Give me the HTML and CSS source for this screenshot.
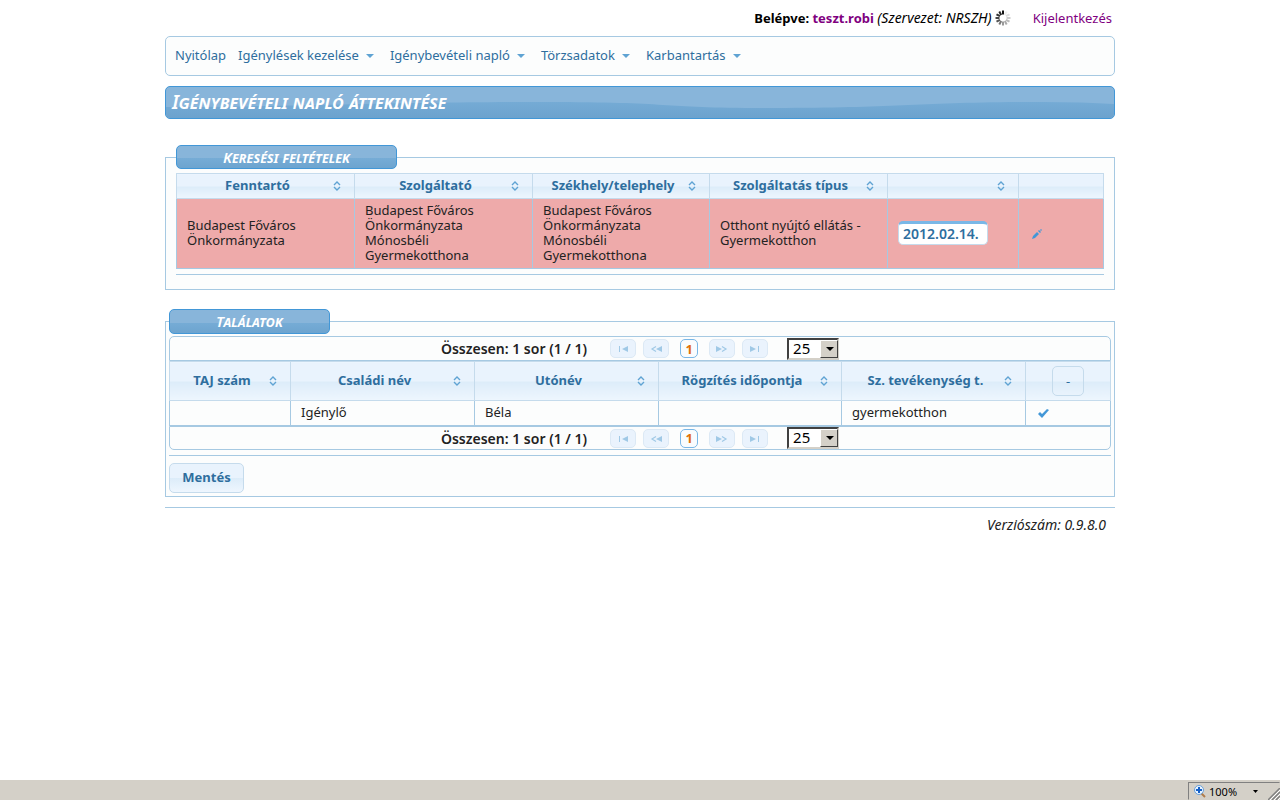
FILE: index.html
```html
<!DOCTYPE html>
<html lang="hu">
<head>
<meta charset="utf-8">
<title>Igénybevételi napló áttekintése</title>
<link rel="stylesheet" href="styles.css">
</head>
<body>
<svg class="defs" aria-hidden="true">
  <symbol id="sort" viewBox="0 0 8 10"><path d="M1 4 4 1 7 4M1 6 4 9 7 6" fill="none" stroke="#5fa3d3" stroke-width="1.4"/></symbol>
  <symbol id="first" viewBox="0 0 12 7"><path d="M2 1h1v6H2zM11 1v6L5 4z" fill="#a0c9e6"/></symbol>
  <symbol id="prev" viewBox="0 0 12 7"><path d="M12 1v6L6 4z" fill="#a0c9e6"/><path d="M6 1.500 2 4 6 6.500" fill="none" stroke="#a0c9e6" stroke-width="1.200"/></symbol>
  <symbol id="next" viewBox="0 0 12 7"><path d="M0 1v6l6-3z" fill="#a0c9e6"/><path d="m6 1.500 4 2.500L6 6.500" fill="none" stroke="#a0c9e6" stroke-width="1.200"/></symbol>
  <symbol id="last" viewBox="0 0 12 7"><path d="M9 1h1v6H9zM1 1v6l6-3z" fill="#a0c9e6"/></symbol>
</svg>
<div class="page">
  <header class="userbar">
    <span><b>Belépve: <a href="#">teszt.robi</a></b> <i>(Szervezet: NRSZH)</i></span>
    <svg class="spinner" viewBox="-8 -8 16 16" stroke-width="2">
      <path d="M0-3.500V-7.500" stroke="#111"/><path d="M-1.800-3-3.700-6.500" stroke="#222"/><path d="M-3-1.800-6.500-3.700" stroke="#333"/>
      <path d="M-3.500 0H-7.500" stroke="#444"/><path d="M-3 1.800-6.500 3.700" stroke="#555"/><path d="M-1.800 3-3.700 6.500" stroke="#777"/>
      <path d="M0 3.500V7.500" stroke="#999"/><path d="M1.800 3 3.700 6.500" stroke="#aaa"/><path d="M3 1.800 6.500 3.700" stroke="#bbb"/>
      <path d="M3.500 0H7.500" stroke="#ccc"/><path d="M3-1.800 6.500-3.700" stroke="#ddd"/><path d="M1.800-3 3.700-6.500" stroke="#eee"/>
    </svg>
    <a class="logout" href="#">Kijelentkezés</a>
  </header>

  <nav class="menu">
    <a href="#">Nyitólap</a>
    <a href="#" class="sub">Igénylések kezelése</a>
    <a href="#" class="sub">Igénybevételi napló</a>
    <a href="#" class="sub">Törzsadatok</a>
    <a href="#" class="sub">Karbantartás</a>
  </nav>

  <h1 class="title">
    <svg class="wave" viewBox="0 0 950 31" preserveAspectRatio="none"><defs><linearGradient id="deep" x2="0" y2="1"><stop stop-color="#75abd5"/><stop offset="1" stop-color="#6da3ce"/></linearGradient></defs><path d="M0 20C120 20 180 16 350 15S480 21 610 21 750 15 880 15Q920 15 950 17V31H0z" fill="url(#deep)"/></svg>
    <span>Igénybevételi napló áttekintése</span>
  </h1>

  <fieldset class="panel search">
    <legend>Keresési feltételek</legend>
    <table class="grid">
      <colgroup><col class="w178"><col class="w178"><col class="w177"><col class="w178"><col class="w131"><col class="w85"></colgroup>
      <thead><tr>
        <th><span class="head"><span>Fenntartó</span><svg><use href="#sort"/></svg></span></th>
        <th><span class="head"><span>Szolgáltató</span><svg><use href="#sort"/></svg></span></th>
        <th><span class="head"><span>Székhely/telephely</span><svg><use href="#sort"/></svg></span></th>
        <th><span class="head"><span>Szolgáltatás típus</span><svg><use href="#sort"/></svg></span></th>
        <th><span class="head"><span></span><svg><use href="#sort"/></svg></span></th>
        <th></th>
      </tr></thead>
      <tbody><tr class="alert">
        <td>Budapest Főváros Önkormányzata</td>
        <td>Budapest Főváros Önkormányzata Mónosbéli Gyermekotthona</td>
        <td>Budapest Főváros Önkormányzata Mónosbéli Gyermekotthona</td>
        <td>Otthont nyújtó ellátás - Gyermekotthon</td>
        <td><input class="date" type="text" value="2012.02.14." aria-label="Dátum"></td>
        <td><button class="icon" type="button" aria-label="Szerkesztés"><svg viewBox="0 0 16 16"><path d="m3 14 1-3 4-4 2 2-4 4zM9 6l1-1 2 2-1 1zM11 5l1-1 1 1-1 1z" fill="#4297d7"/></svg></button></td>
      </tr></tbody>
    </table>
    <hr>
  </fieldset>

  <fieldset class="panel results">
    <legend>Találatok</legend>
    <div class="pager top">
      <b>Összesen: 1 sor (1 / 1)</b>
      <div class="steps">
        <button type="button" disabled aria-label="Első"><svg><use href="#first"/></svg></button>
        <button type="button" disabled aria-label="Előző"><svg><use href="#prev"/></svg></button>
        <button type="button" class="current">1</button>
        <button type="button" disabled aria-label="Következő"><svg><use href="#next"/></svg></button>
        <button type="button" disabled aria-label="Utolsó"><svg><use href="#last"/></svg></button>
      </div>
      <span class="size"><select aria-label="Sorok száma"><option>25</option></select></span>
    </div>
    <table class="grid">
      <colgroup><col class="w121"><col class="w184"><col class="w184"><col class="w183"><col class="w184"><col class="w85"></colgroup>
      <thead><tr>
        <th><span class="head"><span>TAJ szám</span><svg><use href="#sort"/></svg></span></th>
        <th><span class="head"><span>Családi név</span><svg><use href="#sort"/></svg></span></th>
        <th><span class="head"><span>Utónév</span><svg><use href="#sort"/></svg></span></th>
        <th><span class="head"><span>Rögzítés időpontja</span><svg><use href="#sort"/></svg></span></th>
        <th><span class="head"><span>Sz. tevékenység t.</span><svg><use href="#sort"/></svg></span></th>
        <th><button class="filter" type="button">-</button></th>
      </tr></thead>
      <tbody><tr>
        <td></td><td>Igénylő</td><td>Béla</td><td></td><td>gyermekotthon</td>
        <td><button class="icon" type="button" aria-label="Kiválaszt"><svg viewBox="0 0 16 16"><path d="m2 10 2-2 2 2 5-5 2 1-7 8z" fill="#4297d7"/></svg></button></td>
      </tr></tbody>
    </table>
    <div class="pager bottom">
      <b>Összesen: 1 sor (1 / 1)</b>
      <div class="steps">
        <button type="button" disabled aria-label="Első"><svg><use href="#first"/></svg></button>
        <button type="button" disabled aria-label="Előző"><svg><use href="#prev"/></svg></button>
        <button type="button" class="current">1</button>
        <button type="button" disabled aria-label="Következő"><svg><use href="#next"/></svg></button>
        <button type="button" disabled aria-label="Utolsó"><svg><use href="#last"/></svg></button>
      </div>
      <span class="size"><select aria-label="Sorok száma"><option>25</option></select></span>
    </div>
    <hr>
    <button class="save" type="button">Mentés</button>
  </fieldset>

  <footer class="version">Verziószám: 0.9.8.0</footer>
</div>

<div class="status">
  <button class="zoom" type="button">
    <svg class="lens" viewBox="0 0 12 13"><path d="m7 8 4 4" stroke="#b07c4a" stroke-width="2"/><circle cx="5" cy="5" r="4.500" fill="#e8f4ff" stroke="#6a9fd8"/><path d="M5 2v6M2 5h6" stroke="#1560c8" stroke-width="2"/></svg>
    <span>100%</span>
    <svg class="drop" viewBox="0 0 5 3"><path d="M0 0h5L2.500 3z"/></svg>
  </button>
  <svg class="grip" viewBox="0 0 12 12"><path d="M0 12 12 0M4 12l8-8M8 12l4-4" stroke="#808080" stroke-width="1.500"/><path d="M2 12 12 2M6 12l6-6M10 12l2-2" stroke="#fff"/></svg>
</div>
</body>
</html>
```

FILE: styles.css
```css
* { box-sizing: border-box; }
body {
  margin: 0;
  min-height: 100vh;
  display: flex;
  flex-direction: column;
  background: #fff;
  color: #222;
  font: 13px/15px "Noto Sans", "Open Sans", sans-serif;
}
button, input, select { font-family: inherit; margin: 0; }
.defs { display: none; }
.page { width: 100%; max-width: 950px; margin: 0 auto; }

.userbar {
  display: flex;
  justify-content: flex-end;
  align-items: center;
  height: 36px;
  padding-right: 3px;
  color: #000;
}
.userbar a { color: #800080; text-decoration: none; }
.userbar i { font-size: 14px; }
.spinner { width: 16px; height: 16px; margin-left: 3px; }
.userbar .logout { margin-left: 22px; }

.menu {
  display: flex;
  flex-wrap: wrap;
  align-items: center;
  gap: 12px;
  min-height: 40px;
  padding: 0 9px 2px;
  border: 1px solid #a6c9e2;
  border-radius: 5px;
  background: #fcfdfd;
}
.menu a { color: #2e6e9e; text-decoration: none; }
.menu .sub { display: flex; align-items: center; gap: 7px; margin-right: 4px; }
.menu .sub::after { content: ""; margin-top: 2px; border: 4px solid transparent; border-top-color: #5fa3d3; border-bottom: 0; }

.title, .panel legend {
  border: 1px solid #4297d7;
  border-radius: 5px;
  color: #fff;
  font-style: italic;
  font-weight: 600;
  font-variant: small-caps;
}
.title {
  position: relative;
  margin: 10px 0 26px;
  padding: 6px;
  background: #88b5da;
  font-size: 19px;
  line-height: 19px;
  overflow: hidden;
}
.title span { position: relative; }
.wave { position: absolute; inset: 0; width: 100%; height: 100%; }

.panel { margin: 0; border: 1px solid #a6c9e2; background: #fcfdfd; min-width: 0; }
.panel legend {
  margin-left: 0;
  margin-right: auto;
  padding: 0;
  background: linear-gradient(#88b5da 55%, #76acd6 55%, #6da4cf);
  font-size: 15px;
  line-height: 22px;
  text-align: center;
}
.search { padding: 4px 10px 14px; }
.search legend { width: 221px; }
.results { margin-top: 19px; padding: 2px 3px 3px; }
.results legend { width: 161px; line-height: 23px; }

hr { height: 1px; margin: 5px 0 0; border: 0; background: #a6c9e2; }

.grid { width: 100%; table-layout: fixed; border-collapse: collapse; }
.w178 { width: 178px; }
.w177 { width: 177px; }
.w131 { width: 131px; }
.w121 { width: 121px; }
.w184 { width: 184px; }
.w183 { width: 183px; }
.w85 { width: 85px; }
.grid th {
  padding: 0 10px 1px;
  border: 1px solid #c5dbec;
  background: linear-gradient(#e9f3fd 50%, #dcecf9 50%, #eef6fe);
  color: #2e6e9e;
  height: 25px;
}
.head { display: flex; align-items: center; }
.head > span { flex: 1; padding-right: 5px; }
.head svg { flex: none; width: 8px; height: 10px; margin-right: 3px; }
.grid td { height: 25px; padding: 4px 9px 5px 10px; border: 1px solid #a6c9e2; }
.alert { background: #eeaaaa; }
.results .grid th { height: 39px; }
.results .grid td { padding: 0 9px 2px 10px; }

.date {
  display: block;
  width: 90px;
  height: 24px;
  padding: 0 4px 2px;
  border: 1px solid #c5dbec;
  border-top: 3px solid #79b7e7;
  border-radius: 5px;
  background: #fff;
  color: #2e6e9e;
  font-size: 14px;
  font-weight: 600;
}
.icon { display: block; padding: 0; border: 0; background: none; }
.icon svg { display: block; width: 16px; height: 16px; }
.filter {
  width: 32px;
  height: 30px;
  padding: 0;
  border: 1px solid #c5dbec;
  border-radius: 5px;
  background: none;
  color: #2e6e9e;
  font-size: 13px;
}

.pager {
  display: flex;
  align-items: center;
  justify-content: center;
  height: 25px;
  border: 1px solid #a6c9e2;
  font-size: 14px;
}
.pager b { font-weight: 600; }
.top { border-radius: 5px 5px 0 0; }
.bottom { height: 24px; border-radius: 0 0 5px 5px; }
.steps { display: flex; gap: 7px; margin: 0 19px 0 23px; }
.steps button {
  display: flex;
  align-items: center;
  justify-content: center;
  width: 26px;
  height: 19px;
  padding: 0;
  border: 1px solid #dce9f5;
  border-radius: 5px;
  background: #eaf3fd;
}
.steps svg { width: 12px; height: 7px; }
.steps .current {
  width: 18px;
  margin: 0 4px;
  border-color: #79b7e7;
  background: #f9fcfe;
  color: #e17009;
  font-size: 13px;
  font-weight: bold;
}
.size { position: relative; }
.size select {
  appearance: none;
  display: block;
  width: 52px;
  height: 22px;
  padding: 0 4px 2px;
  border: 2px solid;
  border-color: #404040 #d4d0c8 #d4d0c8 #404040;
  border-radius: 0;
  background: #fff;
  color: #000;
  font-size: 15px;
  line-height: 16px;
}
.size::before {
  content: "";
  position: absolute;
  top: 2px;
  right: 1px;
  bottom: 2px;
  width: 16px;
  border: 1px solid;
  border-color: #fff #404040 #404040 #fff;
  background: #d4d0c8;
  pointer-events: none;
}
.size::after {
  content: "";
  position: absolute;
  top: 9px;
  right: 5px;
  border: 4px solid transparent;
  border-top-color: #000;
  border-bottom: 0;
  pointer-events: none;
}

.save {
  display: block;
  width: 75px;
  height: 30px;
  margin-top: 7px;
  padding: 0 0 2px;
  border: 1px solid #c5dbec;
  border-radius: 5px;
  background: linear-gradient(#e9f3fd 50%, #dcecf9 50%, #eef6fe);
  color: #2e6e9e;
  font-size: 13px;
  font-weight: bold;
}
.version {
  margin-top: 10px;
  padding: 9px 9px 0;
  border-top: 1px solid #a6c9e2;
  font-size: 14px;
  font-style: italic;
  text-align: right;
}

.status {
  position: relative;
  display: flex;
  justify-content: flex-end;
  align-items: flex-end;
  height: 20px;
  margin-top: auto;
  background: #d4d0c8;
}
.zoom {
  display: flex;
  align-items: center;
  width: 92px;
  height: 18px;
  padding: 0 21px 0 5px;
  border: 1px solid;
  border-color: #808080 transparent transparent #808080;
  background: none;
  color: #000;
  font-size: 11px;
}
.lens { width: 12px; height: 13px; margin-right: 3px; }
.drop { width: 5px; height: 3px; margin-left: auto; }
.grip { position: absolute; right: 0; bottom: 0; width: 12px; height: 12px; }
```
